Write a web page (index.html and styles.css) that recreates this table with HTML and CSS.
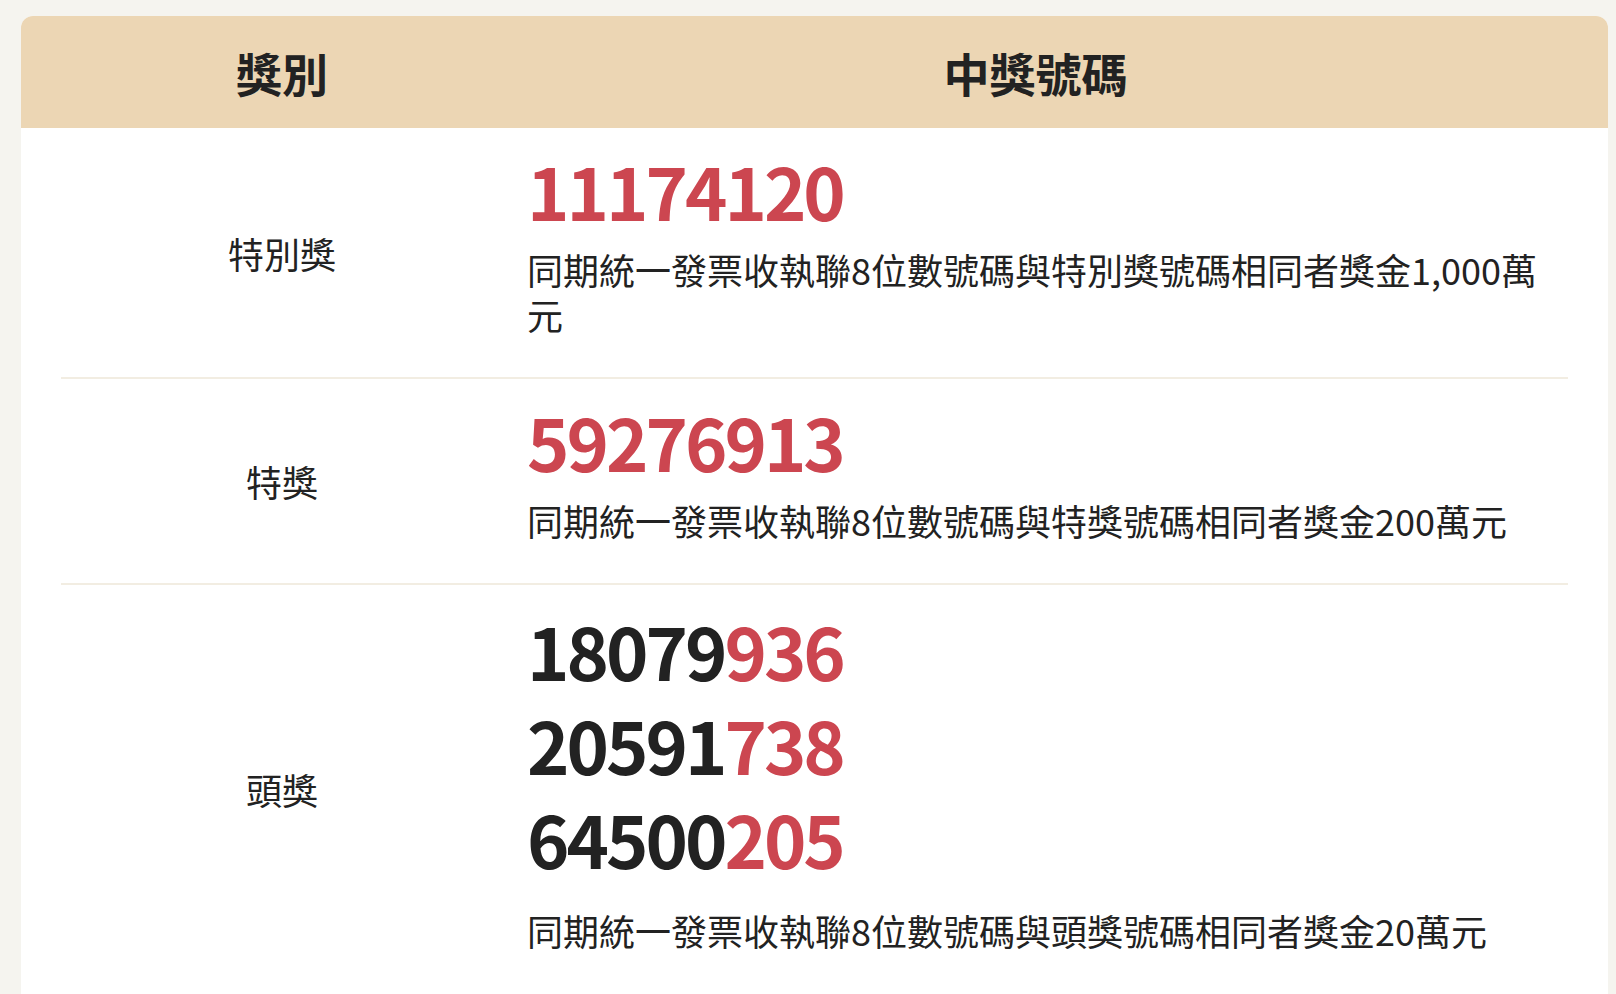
FILE: index.html
```html
<!DOCTYPE html>
<html lang="zh-Hant">
<head>
<meta charset="utf-8">
<title>統一發票中獎號碼</title>
<link rel="stylesheet" href="styles.css">
</head>
<body>
<div class="card">
  <div class="head">
    <div class="hcell">獎別</div>
    <div class="hcell">中獎號碼</div>
  </div>
  <div class="tbody">
    <div class="row">
      <div class="label">特別獎</div>
      <div class="content">
        <div class="num red">11174120</div>
        <p class="desc">同期統一發票收執聯8位數號碼與特別獎號碼相同者獎金1,000萬元</p>
      </div>
    </div>
    <div class="row">
      <div class="label">特獎</div>
      <div class="content">
        <div class="num red">59276913</div>
        <p class="desc">同期統一發票收執聯8位數號碼與特獎號碼相同者獎金200萬元</p>
      </div>
    </div>
    <div class="row">
      <div class="label">頭獎</div>
      <div class="content">
        <div class="nums">
          <div class="num">18079<span class="red">936</span></div>
          <div class="num">20591<span class="red">738</span></div>
          <div class="num">64500<span class="red">205</span></div>
        </div>
        <p class="desc">同期統一發票收執聯8位數號碼與頭獎號碼相同者獎金20萬元</p>
      </div>
    </div>
  </div>
</div>
</body>
</html>
```
FILE: styles.css
```css
html, body {
  margin: 0;
  padding: 0;
  background: #f5f4ef;
}
body {
  font-family: "Noto Sans CJK TC", "Noto Sans", sans-serif;
  color: #222222;
  padding: 16px 8px 0 21px;
  overflow: hidden;
  height: 994px;
  box-sizing: border-box;
}
.card {
  background: #ffffff;
  border-radius: 12px 12px 0 0;
  overflow: hidden;
  min-height: 1000px;
}
.head {
  background: #ecd6b4;
  height: 112px;
  display: grid;
  grid-template-columns: 442px 1fr;
  padding: 0 40px;
  align-items: center;
}
.hcell {
  text-align: center;
  font-size: 46px;
  font-weight: 700;
  color: #222222;
}
.tbody {
  padding: 0 40px;
}
.row {
  display: grid;
  grid-template-columns: 442px 1fr;
  border-bottom: 2px solid #f2ede2;
}
.row:last-child {
  border-bottom: none;
}
.label {
  display: flex;
  align-items: center;
  justify-content: center;
  font-size: 36px;
}
.content {
  padding: 15px 24px 40px 24px;
}
.row:last-child .content {
  padding-top: 18px;
}
.num {
  font-size: 72px;
  font-weight: 700;
  line-height: 94px;
  letter-spacing: -3px;
}
.red {
  color: #cc4650;
}
.nums {
  margin-bottom: 23px;
}
.desc {
  margin: 10px 0 0 0;
  font-size: 36px;
  line-height: 45px;
}
```
